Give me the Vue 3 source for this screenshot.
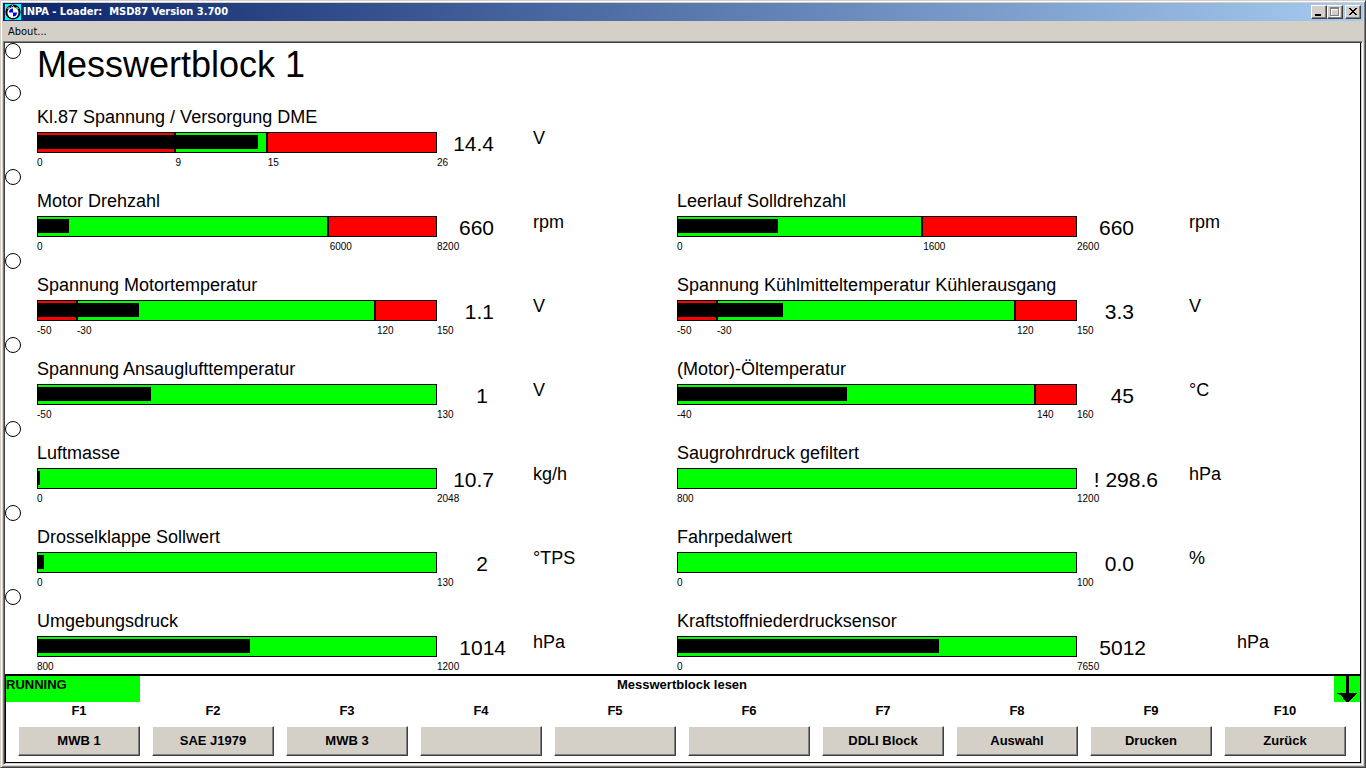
<script setup>
const inputs = [
  [
    { name: 'Kl.87 Spannung / Versorgung DME', min: 0, low: 9, high: 15, max: 26, fill: 55.2, value: '14.4', unit: 'V' },
    null
  ],
  [
    { name: 'Motor Drehzahl', min: 0, high: 6000, max: 8200, fill: 7.8, value: '660', unit: 'rpm' },
    { name: 'Leerlauf Solldrehzahl', min: 0, high: 1600, max: 2600, fill: 25.2, value: '660', unit: 'rpm' }
  ],
  [
    { name: 'Spannung Motortemperatur', min: -50, low: -30, high: 120, max: 150, fill: 25.5, value: '1.1', unit: 'V' },
    { name: 'Spannung Kühlmitteltemperatur Kühlerausgang', min: -50, low: -30, high: 120, max: 150, fill: 26.5, value: '3.3', unit: 'V' }
  ],
  [
    { name: 'Spannung Ansauglufttemperatur', min: -50, max: 130, fill: 28.5, value: '1', unit: 'V', format: 'single' },
    { name: '(Motor)-Öltemperatur', min: -40, high: 140, max: 160, fill: 42.5, value: '45', unit: '°C' }
  ],
  [
    { name: 'Luftmasse', min: 0, max: 2048, fill: 0.4, value: '10.7', unit: 'kg/h' },
    { name: 'Saugrohrdruck gefiltert', min: 800, max: 1200, fill: 0, value: '! 298.6', unit: 'hPa', format: 'long' }
  ],
  [
    { name: 'Drosselklappe Sollwert', min: 0, max: 130, fill: 1.6, value: '2', unit: '°TPS', format: 'single' },
    { name: 'Fahrpedalwert', min: 0, max: 100, fill: 0, value: '0.0', unit: '%' }
  ],
  [
    { name: 'Umgebungsdruck', min: 800, max: 1200, fill: 53.3, value: '1014', unit: 'hPa', format: 'quad' },
    { name: 'Kraftstoffniederdrucksensor', min: 0, max: 7650, fill: 65.5, value: '5012', unit: 'hPa', format: 'quad', far: true }
  ]
]

const pct = (g, v) => ((v - g.min) / (g.max - g.min)) * 100

const zones = (g) => {
  const edges = [g.min]
  const colors = []
  if (g.low !== undefined) { edges.push(g.low); colors.push('bad') }
  colors.push('good')
  if (g.high !== undefined) { edges.push(g.high); colors.push('bad') }
  edges.push(g.max)
  return colors.map((kind, i) => ({ kind, width: pct(g, edges[i + 1]) - pct(g, edges[i]) }))
}

const ticks = (g) => [g.min, g.low, g.high, g.max]
  .filter((v) => v !== undefined)
  .map((v) => ({ v, left: pct(g, v) }))

const keys = ['MWB 1', 'SAE J1979', 'MWB 3', '', '', '', 'DDLI Block', 'Auswahl', 'Drucken', 'Zurück']
</script>

<template>
  <div class="window">
    <header class="titlebar">
      <svg class="logo" width="16" height="16" viewBox="0 0 16 16" aria-hidden="true">
        <rect width="16" height="16" fill="#00ffff" />
        <circle cx="8" cy="8" r="7.600" fill="#000" />
        <path d="M2.500 5l2-2M6.500 2.500l1-1 1 1M11.500 3l2 2" stroke="#fff" stroke-width="1" fill="none" />
        <circle cx="8" cy="8.500" r="5.500" fill="#fff" />
        <path d="M8 8.500V4.500A4 4 0 0 0 4 8.500zM8 8.500V12.500A4 4 0 0 0 12 8.500z" fill="#0000ff" />
      </svg>
      <h1 class="caption">INPA - Loader:&nbsp; MSD87 Version 3.700</h1>
      <div class="controls">
        <button type="button" class="ctl" aria-label="Minimieren">
          <svg width="12" height="10" viewBox="0 0 12 10"><path d="M2 7h6v2H2z" fill="#000" /></svg>
        </button>
        <button type="button" class="ctl" aria-label="Maximieren" disabled>
          <svg width="12" height="10" viewBox="0 0 12 10" shape-rendering="crispEdges">
            <path d="M2 1h9v9H2zM3 3v6h7V3z" fill="#fff" fill-rule="evenodd" />
            <path d="M1 0h9v9H1zM2 2v6h7V2z" fill="#808080" fill-rule="evenodd" />
          </svg>
        </button>
        <button type="button" class="ctl close" aria-label="Schließen">
          <svg width="12" height="10" viewBox="0 0 12 10" shape-rendering="crispEdges">
            <path d="M2 1h2v1h1v1h2V2h1V1h2v1H9v1H8v1H7v1h1v1h1v1h1v1H8V7H7V6H5v1H4v1H2V7h1V6h1V5h1V4H4V3H3V2H2z" fill="#000" />
          </svg>
        </button>
      </div>
    </header>

    <nav class="menu"><button type="button" class="menu-item">About...</button></nav>

    <div class="client">
      <main class="screen">
        <div class="line head">
          <i class="hole"></i>
          <h2>Messwertblock 1</h2>
        </div>
        <div v-for="(row, r) in inputs" :key="r" class="line">
          <i class="hole"></i>
          <template v-for="(g, c) in row" :key="c">
            <section v-if="g" class="gauge" :class="{ second: c === 1 }">
              <h3>{{ g.name }}</h3>
              <div class="reading">
                <div class="bar">
                  <span v-for="(z, i) in zones(g)" :key="i" class="zone" :class="z.kind" :style="{ width: z.width + '%' }"></span>
                  <span class="fill" :style="{ width: g.fill + '%' }"></span>
                </div>
                <output class="value" :class="g.format">{{ g.value }}</output>
                <span class="unit" :class="{ far: g.far }">{{ g.unit }}</span>
              </div>
              <div class="scale">
                <span v-for="t in ticks(g)" :key="t.v" class="tick" :style="{ left: t.left + '%' }">{{ t.v }}</span>
              </div>
            </section>
          </template>
        </div>
      </main>

      <footer class="panel">
        <div class="status">
          <span class="running">RUNNING</span>
          <span class="message">Messwertblock lesen</span>
          <span class="more">
            <svg width="26" height="26" viewBox="0 0 26 26" shape-rendering="crispEdges" aria-hidden="true">
              <path d="M12 0h3v17h8v1h-1v1h-1v1h-1v1h-1v1h-1v1h-1v1h-1v1h-1v1h-3v-1h-1v-1h-1v-1h-1v-1H9v-1H8v-1H7v-1H5v-1H3v-1h9z" fill="#000" />
            </svg>
          </span>
        </div>
        <div class="keys">
          <div v-for="(k, i) in keys" :key="i" class="key">
            <label :for="'f' + (i + 1)">F{{ i + 1 }}</label>
            <button :id="'f' + (i + 1)" type="button">{{ k }}</button>
          </div>
        </div>
      </footer>
    </div>
  </div>
</template>

<style>
body {
  margin: 0;
  background: #d4d0c8;
}
</style>

<style scoped>
* {
  box-sizing: border-box;
}
.window {
  display: flex;
  flex-direction: column;
  min-height: 100vh;
  padding: 1px;
  border: 1px solid;
  border-color: #d4d0c8 #404040 #404040 #d4d0c8;
  box-shadow: inset 1px 1px #fff, inset -1px -1px #808080;
  background: #d4d0c8;
  color: #000;
  font-family: "Liberation Sans", Arial, sans-serif;
}
h1, h2, h3 {
  margin: 0;
  font-weight: normal;
}
.titlebar {
  display: flex;
  align-items: center;
  height: 18px;
  margin: 1px 1px 0;
  padding: 0 2px;
  background: linear-gradient(90deg, #0a246a, #a6caf0);
}
.logo {
  flex: none;
}
.caption {
  flex: 1;
  margin-left: 2px;
  color: #fff;
  font: bold 11px/18px Tahoma, "DejaVu Sans Condensed", "Open Sans", sans-serif;
}
.controls {
  display: flex;
}
.ctl {
  display: flex;
  width: 16px;
  height: 14px;
  padding: 1px;
  border: 1px solid;
  border-color: #fff #404040 #404040 #fff;
  box-shadow: inset -1px -1px #808080;
  background: #d4d0c8;
}
.ctl svg {
  flex: none;
}
.close {
  margin-left: 2px;
}
.menu {
  height: 20px;
  padding-left: 6px;
}
.menu-item {
  padding: 0;
  border: 0;
  background: none;
  color: #000;
  font: 11px/19px Tahoma, "DejaVu Sans Condensed", "Noto Sans", sans-serif;
}
.client {
  display: flex;
  flex: 1;
  flex-direction: column;
  margin: 0 1px 1px;
  padding: 1px;
  border: 1px solid;
  border-color: #808080 #fff #fff #808080;
  box-shadow: inset 1px 1px #404040;
}
.screen {
  flex: 1;
  padding-bottom: 1px;
  border-right: 1px solid #000;
  background: #fff;
}
.line {
  display: grid;
  grid-template-columns: 32px 640px 1fr;
  align-items: start;
  height: 84px;
}
.line.head {
  height: 42px;
}
.hole {
  width: 16px;
  height: 16px;
  border: 1px solid #000;
  border-radius: 50%;
}
h2 {
  grid-column: 2 / 4;
  font-size: 36px;
  line-height: 44px;
}
.gauge {
  padding-top: 22px;
}
h3 {
  font-size: 18px;
  line-height: 20px;
}
.reading {
  display: flex;
  margin-top: 5px;
  height: 21px;
}
.bar {
  position: relative;
  display: flex;
  flex: none;
  width: 400px;
  border: 1px solid #000;
}
.zone:has(+ .zone) {
  border-right: 2px solid #000;
}
.good {
  background: #00ff00;
}
.bad {
  background: #ff0000;
}
.fill {
  position: absolute;
  top: 2px;
  bottom: 3px;
  left: 0;
  background: #000;
}
.value {
  width: 92px;
  padding-right: 35px;
  font-size: 21px;
  line-height: 24px;
  text-align: right;
  white-space: nowrap;
}
.single {
  padding-right: 41px;
}
.quad {
  padding-right: 23px;
}
.long {
  padding-right: 11px;
}
.unit {
  margin-left: 4px;
  font-size: 18px;
  line-height: 12px;
}
.second .unit {
  margin-left: 20px;
}
.second .far {
  margin-left: 68px;
}
.scale {
  position: relative;
  width: 400px;
  height: 16px;
}
.tick {
  position: absolute;
  top: 3px;
  font-size: 10px;
  line-height: 14px;
}
.panel {
  padding-bottom: 6px;
  border: 1px solid #000;
  border-top-width: 2px;
  background: #fff;
  font-size: 13px;
  font-weight: bold;
}
.status {
  display: grid;
  grid-template-columns: 134px 1fr 136px;
  height: 26px;
  line-height: 17px;
}
.running {
  background: #00ff00;
}
.message {
  text-align: center;
}
.more {
  display: flex;
  justify-self: end;
  background: #00ff00;
}
.keys {
  display: grid;
  grid-template-columns: repeat(10, 1fr);
  column-gap: 12px;
  padding: 0 14px 0 12px;
}
.key {
  display: flex;
  flex-direction: column;
}
.key label {
  height: 24px;
  line-height: 18px;
  text-align: center;
}
.key button {
  height: 30px;
  padding: 0 0 2px;
  border: 1px solid;
  border-color: #fff #404040 #404040 #fff;
  box-shadow: inset -1px -1px #808080;
  background: #d4d0c8;
  color: #000;
  font: inherit;
}
</style>
